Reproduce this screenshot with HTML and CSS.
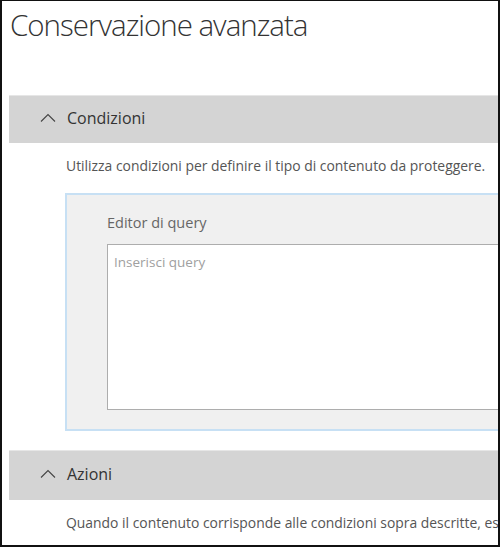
FILE: index.html
```html
<!DOCTYPE html>
<html lang="it">
<head>
<meta charset="utf-8">
<link rel="stylesheet" href="styles.css">
</head>
<body>
<div class="frame">
  <h1 class="title">Conservazione avanzata</h1>
  <section class="section">
    <div class="section-header">
      <svg class="chevron" width="16" height="10" viewBox="0 0 16 10"><path d="M1 8.5 L8 1.5 L15 8.5" fill="none" stroke="#444" stroke-width="1.1"/></svg>
      <span class="section-title">Condizioni</span>
    </div>
    <p class="section-desc">Utilizza condizioni per definire il tipo di contenuto da proteggere.</p>
    <div class="editor">
      <div class="editor-label">Editor di query</div>
      <div class="query-box"><span class="placeholder">Inserisci query</span></div>
    </div>
  </section>
  <section class="section">
    <div class="section-header">
      <svg class="chevron" width="16" height="10" viewBox="0 0 16 10"><path d="M1 8.5 L8 1.5 L15 8.5" fill="none" stroke="#444" stroke-width="1.1"/></svg>
      <span class="section-title">Azioni</span>
    </div>
    <p class="section-desc">Quando il contenuto corrisponde alle condizioni sopra descritte, esegui le azioni seguenti.</p>
  </section>
</div>
</body>
</html>
```
FILE: styles.css
```css
* { box-sizing: border-box; }
html, body { margin: 0; padding: 0; background: #fff; }
body { font-family: "Open Sans", "Noto Sans", sans-serif; color: #333; }
.frame {
  width: 500px;
  height: 547px;
  border: 2px solid #111;
  border-width: 1px 2px 2px 2px;
  overflow: hidden;
  background: #fff;
}
.title {
  margin: 0;
  padding: 3px 0 0 8px;
  height: 94px;
  font-weight: 300;
  font-size: 29.5px;
  color: #333;
  letter-spacing: -1px;
  white-space: nowrap;
}
.section { margin-left: 7px; }
.section-header {
  height: 48px;
  background: #d4d4d4;
  border-top: 1px solid #e6e6e6;
  display: flex;
  align-items: center;
  padding-left: 31px;
}
.chevron { margin-right: 11px; margin-top: -4px; }
.section-title { font-size: 16px; color: #333; margin-top: -3px; }
.section-desc {
  margin: 0;
  padding: 13px 0 0 57px;
  height: 50px;
  font-size: 13.9px;
  line-height: 20px;
  color: #555;
  white-space: nowrap;
}
.editor {
  margin-left: 56px;
  width: 520px;
  height: 238px;
  background: #f0f0f0;
  border: 2px solid #c7e0f4;
  padding: 18px 0 0 40px;
}
.editor-label { font-size: 14.5px; line-height: 20px; color: #666; height: 31px; }
.query-box {
  height: 166px;
  background: #fff;
  border: 1px solid #adadad;
  padding: 7px 6px;
  line-height: 18px;
}
.placeholder { font-size: 13.5px; color: #a0a0a0; }
.section + .section { margin-top: 19px; }
.section + .section .section-header { height: 50px; }
```
